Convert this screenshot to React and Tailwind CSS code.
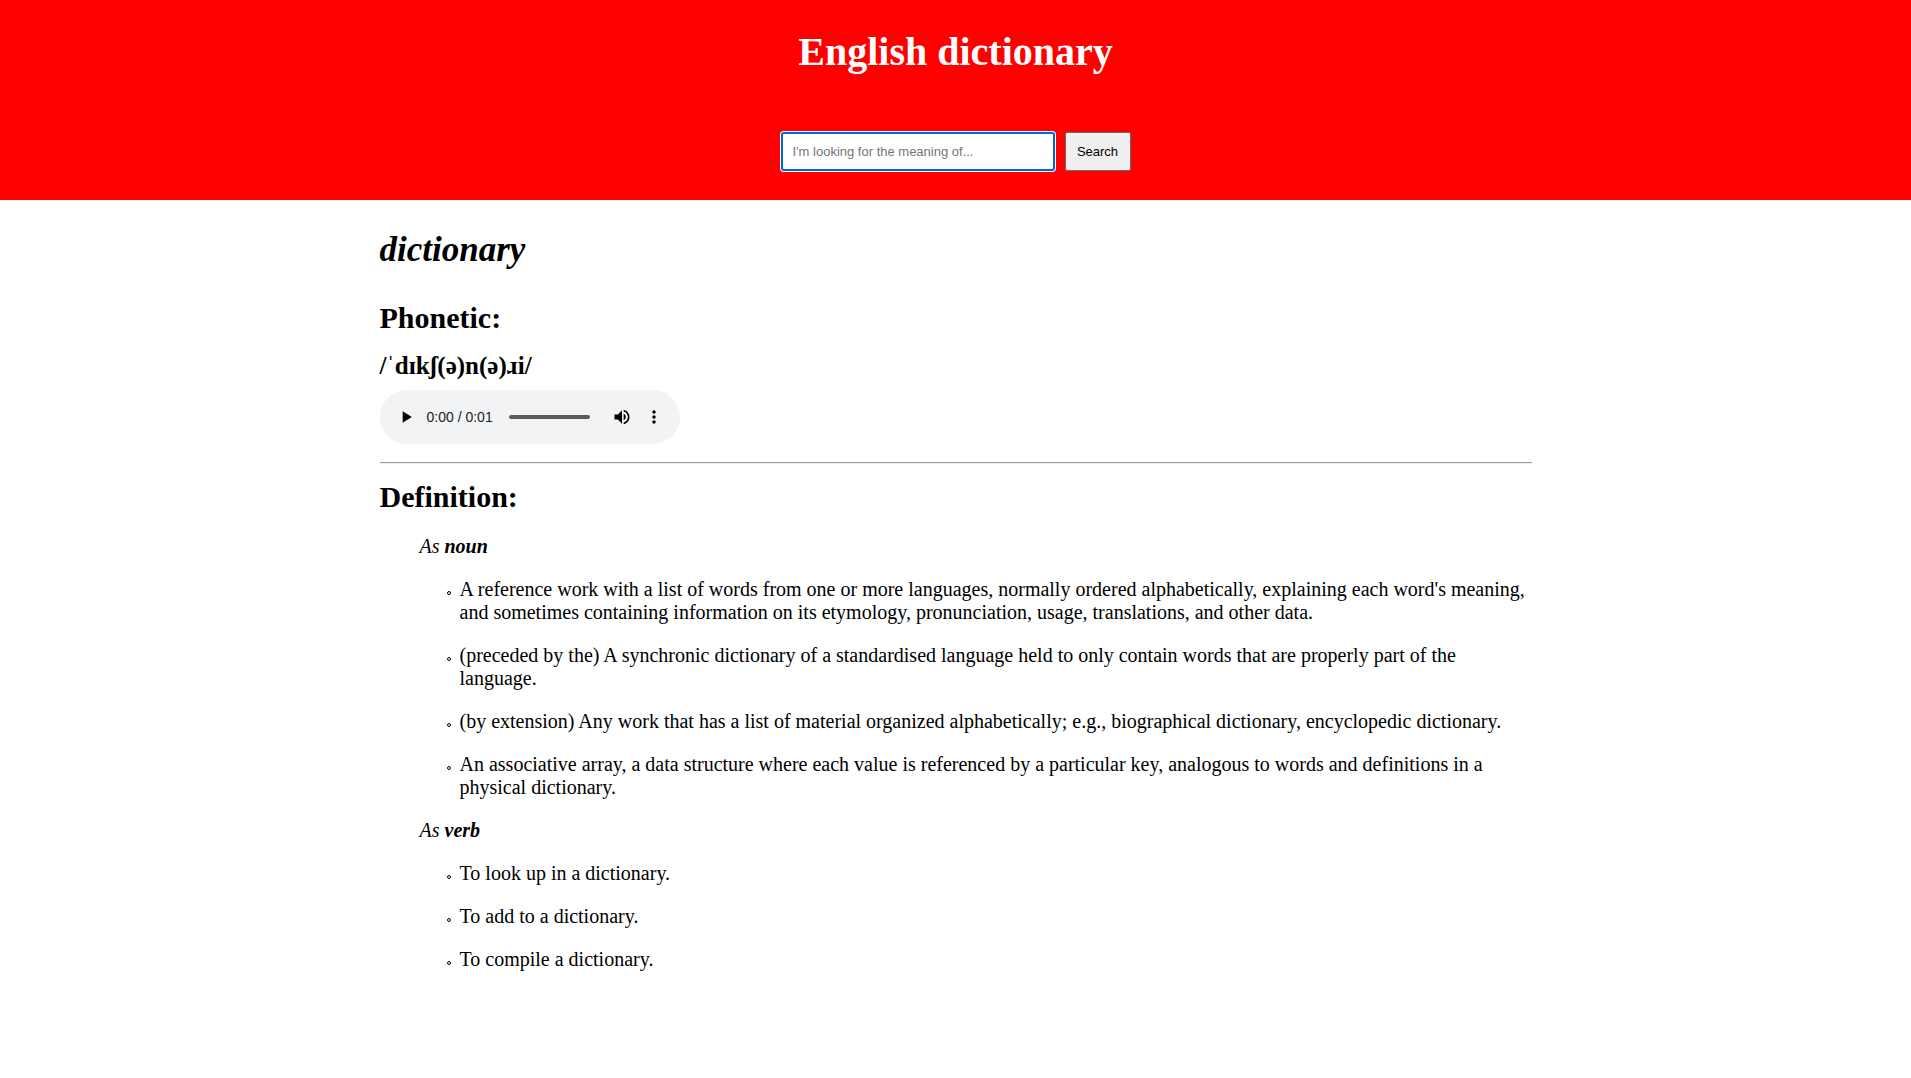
const entries = [
  {
    part: "noun",
    meanings: [
      "A reference work with a list of words from one or more languages, normally ordered alphabetically, explaining each word's meaning, and sometimes containing information on its etymology, pronunciation, usage, translations, and other data.",
      "(preceded by the) A synchronic dictionary of a standardised language held to only contain words that are properly part of the language.",
      "(by extension) Any work that has a list of material organized alphabetically; e.g., biographical dictionary, encyclopedic dictionary.",
      "An associative array, a data structure where each value is referenced by a particular key, analogous to words and definitions in a physical dictionary.",
    ],
  },
  {
    part: "verb",
    meanings: ["To look up in a dictionary.", "To add to a dictionary.", "To compile a dictionary."],
  },
];

function IconButton({ label, path }) {
  return (
    <button type="button" aria-label={label} className="flex size-8 shrink-0 items-center justify-center">
      <svg viewBox="0 0 24 24" className="size-5 fill-black">
        <path d={path} />
      </svg>
    </button>
  );
}

function Header() {
  return (
    <header className="flex flex-col items-center bg-[#ff0000] px-4 pt-[29px] pb-[29px]">
      <h1 className="text-[40px] leading-[46px] font-bold text-white">English dictionary</h1>
      <form
        className="mt-[57px] flex h-[39px] gap-2.5 font-['Liberation_Sans',Arial,sans-serif] text-[13px]"
        onSubmit={(e) => e.preventDefault()}
      >
        <input
          type="text"
          aria-label="Word to look up"
          placeholder="I'm looking for the meaning of..."
          className="w-[274px] rounded-[3px] border-2 border-[#0067d6] bg-white px-2.5 text-black shadow-[0_0_0_1px_#fff] outline-none placeholder:text-[#757575]"
        />
        <button type="submit" className="w-[66px] rounded-[2px] border border-[#6b6b6b] bg-[#efefef] text-black">
          Search
        </button>
      </form>
    </header>
  );
}

function Player() {
  return (
    <div className="mt-2.5 flex h-[54px] w-[300px] items-center rounded-full bg-[#f1f3f4] px-2.5 font-['Liberation_Sans',Arial,sans-serif] text-sm text-[#222]">
      <IconButton label="Play" path="M8 5v14l11-7z" />
      <span className="ml-[5px] whitespace-nowrap">0:00 / 0:01</span>
      <input
        type="range"
        aria-label="Seek"
        min="0"
        max="1"
        defaultValue="0"
        className="mx-4 h-1 min-w-0 flex-1 appearance-none rounded-full bg-[#5a5a5a] [&::-webkit-slider-thumb]:size-0 [&::-webkit-slider-thumb]:appearance-none"
      />
      <IconButton
        label="Mute"
        path="M3 9v6h4l5 5V4L7 9H3zm13.5 3c0-1.77-1.02-3.29-2.5-4.03v8.05c1.48-.73 2.5-2.25 2.5-4.02zM14 3.23v2.06c2.89.86 5 3.54 5 6.71s-2.11 5.85-5 6.71v2.06c4.01-.91 7-4.49 7-8.77s-2.99-7.86-7-8.77z"
      />
      <IconButton
        label="More options"
        path="M12 8c1.1 0 2-.9 2-2s-.9-2-2-2-2 .9-2 2 .9 2 2 2zm0 2c-1.1 0-2 .9-2 2s.9 2 2 2 2-.9 2-2-.9-2-2-2zm0 6c-1.1 0-2 .9-2 2s.9 2 2 2 2-.9 2-2-.9-2-2-2z"
      />
    </div>
  );
}

function Entry({ part, meanings }) {
  return (
    <section className="flex flex-col gap-5">
      <p className="italic">
        As <strong>{part}</strong>
      </p>
      <ul className="flex flex-col gap-5 pl-[27px]">
        {meanings.map((text) => (
          <li key={text} className="flex gap-[9px]">
            <span className="mt-[13px] size-1 shrink-0 rounded-full border border-black" />
            <p>{text}</p>
          </li>
        ))}
      </ul>
    </section>
  );
}

export default function App() {
  return (
    <div className="min-h-screen bg-white font-['Liberation_Serif','Times_New_Roman',serif] text-black">
      <Header />
      <main className="mx-auto max-w-6xl pt-[29px] pb-20">
        <h2 className="text-[35px] leading-[41px] font-bold italic">dictionary</h2>
        <h3 className="mt-[31px] text-[30px] leading-[34px] font-bold">Phonetic:</h3>
        <p className="mt-4 text-[25px] leading-[29px] font-bold">/ˈdɪkʃ(ə)n(ə)ɹi/</p>
        <Player />
        <hr className="mt-[18px] border-t border-b border-t-[#9a9a9a] border-b-[#eeeeee]" />
        <h3 className="mt-4 text-[30px] leading-[34px] font-bold">Definition:</h3>
        <div className="mt-[21px] flex flex-col gap-5 pl-10 text-[20px] leading-[23px]">
          {entries.map((entry) => (
            <Entry key={entry.part} {...entry} />
          ))}
        </div>
      </main>
    </div>
  );
}
